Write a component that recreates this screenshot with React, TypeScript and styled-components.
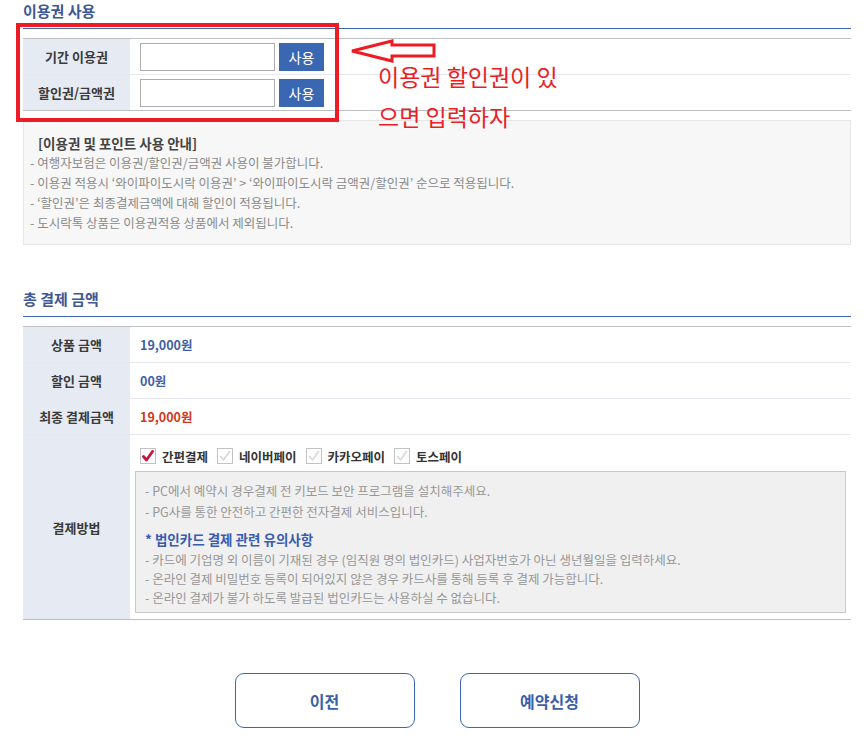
import React from "react";
import styled, {createGlobalStyle} from "styled-components";

const GlobalStyle = createGlobalStyle`
  body {
    margin: 0;
    background: #fff;
    font-family: "Noto Sans CJK KR", "Noto Sans", sans-serif;
    color: #333;
  }
`

const Page = styled.div`
  position: relative;
  width: 828px;
  padding: 0 15px 11px 23px;
`

const SectionTitle = styled.h2<{ $top?: number }>`
  margin: ${props => props.$top || 0}px 0 0;
  padding: 0 0 6px;
  font-size: 15px;
  line-height: 22px;
  font-weight: 700;
  color: #3d5893;
  border-bottom: 1px solid #3c66b1;
`

const FormTable = styled.div`
  margin-top: 9px;
  border-top: 1px solid #bcc0c5;
`

const Row = styled.div<{ $height: number }>`
  display: grid;
  grid-template-columns: 107px 1fr;
  min-height: ${props => props.$height}px;
  border-bottom: 1px solid #e7e7ef;

  &:last-child {
    border-bottom-color: #bcc0c5;
  }
`

const Label = styled.div`
  display: flex;
  align-items: center;
  justify-content: center;
  background: #e6ebf3;
  font-size: 13px;
  font-weight: 700;
  color: #3a3a3a;
`

const Cell = styled.div`
  display: flex;
  align-items: center;
  gap: 4px;
  padding-left: 10px;
`

const TextInput = styled.input`
  box-sizing: border-box;
  width: 135px;
  height: 28px;
  border: 1px solid #acacac;
  padding: 0 6px;
  outline: none;
`

const UseButton = styled.button`
  width: 45px;
  height: 28px;
  border: none;
  background: #3a67b1;
  color: #fff;
  font-family: inherit;
  font-size: 14px;
  padding: 0;
`

const InfoBox = styled.div`
  margin-top: 9px;
  padding: 12px 6px 11px;
  background: #f7f7f7;
  border: 1px solid #e6e6e6;
`

const InfoTitle = styled.div`
  margin-left: 8px;
  font-size: 13.5px;
  line-height: 20px;
  font-weight: 700;
  color: #444;
`

const Note = styled.div<{ $lh?: number, $tone?: string }>`
  font-size: 12.5px;
  line-height: ${props => props.$lh || 20}px;
  color: ${props => props.$tone || '#8a8a8a'};
  white-space: nowrap;
`

const Amount = styled.span<{ $red?: boolean }>`
  font-size: 12.5px;
  font-weight: 700;
  color: ${props => props.$red ? '#d2381b' : '#3e5ea8'};
`

const PayCell = styled.div`
  padding: 13px 5px 5px;
`

const CheckRow = styled.div`
  display: flex;
  align-items: center;
  gap: 9px;
  margin-left: 5px;
  height: 16px;
`

const CheckItem = styled.label`
  display: flex;
  align-items: center;
  gap: 6px;
  font-size: 12.5px;
  font-weight: 700;
  color: #333;
`

const Box = styled.span`
  display: flex;
  align-items: center;
  justify-content: center;
  box-sizing: border-box;
  width: 16px;
  height: 16px;
  border: 1px solid #c2c2c2;
  background: #fff;
`

const NoticeBox = styled.div`
  margin-top: 7px;
  padding: 8px 9px 5px;
  background: #f0f0f0;
  border: 1px solid #c9c9c9;
`

const NoticeTitle = styled.div`
  margin-top: 6px;
  font-size: 13.5px;
  line-height: 22px;
  font-weight: 700;
  color: #3a5cb0;
`

const ButtonRow = styled.div`
  display: flex;
  justify-content: center;
  gap: 45px;
  margin-top: 53px;
`

const OutlineButton = styled.button`
  width: 180px;
  height: 55px;
  border: 1px solid #3b66b2;
  border-radius: 9px;
  background: #fff;
  color: #3b5ea8;
  font-family: inherit;
  font-size: 16px;
  font-weight: 700;
`

/* annotation drawn over the page */
const MarkBox = styled.div`
  position: absolute;
  left: 16px;
  top: 23px;
  width: 315px;
  height: 91px;
  border: 4px solid #ed1c24;
  pointer-events: none;
`

const MarkArrow = styled.svg`
  position: absolute;
  left: 348px;
  top: 36px;
`

const MarkText = styled.div`
  position: absolute;
  left: 378px;
  top: 56px;
  font-size: 23px;
  line-height: 40px;
  color: #ed1c24;
`

const Check = ({on}: { on?: boolean }) => (
    <Box>
        <svg width="12" height="12" viewBox="0 0 12 12">
            <path d="M1.5 6.5 L4.5 10 L10.5 1.5" fill="none" stroke={on ? '#c8163c' : '#d6d6d6'}
                  strokeWidth={on ? 2.8 : 1.6} strokeLinecap="round" strokeLinejoin="round"/>
        </svg>
    </Box>
)

const payMethods = [
    {name: '간편결제', on: true},
    {name: '네이버페이'},
    {name: '카카오페이'},
    {name: '토스페이'},
]

export default function App() {
    return (
        <Page>
            <GlobalStyle/>
            <SectionTitle>이용권 사용</SectionTitle>
            <FormTable>
                <Row $height={35}>
                    <Label>기간 이용권</Label>
                    <Cell>
                        <TextInput/>
                        <UseButton>사용</UseButton>
                    </Cell>
                </Row>
                <Row $height={35}>
                    <Label>할인권/금액권</Label>
                    <Cell>
                        <TextInput/>
                        <UseButton>사용</UseButton>
                    </Cell>
                </Row>
            </FormTable>
            <InfoBox>
                <InfoTitle>[이용권 및 포인트 사용 안내]</InfoTitle>
                <Note>- 여행자보험은 이용권/할인권/금액권 사용이 불가합니다.</Note>
                <Note>- 이용권 적용시 ‘와이파이도시락 이용권’ &gt; ‘와이파이도시락 금액권/할인권’ 순으로 적용됩니다.</Note>
                <Note>- ‘할인권’은 최종결제금액에 대해 할인이 적용됩니다.</Note>
                <Note>- 도시락톡 상품은 이용권적용 상품에서 제외됩니다.</Note>
            </InfoBox>

            <SectionTitle $top={43}>총 결제 금액</SectionTitle>
            <FormTable>
                <Row $height={35}>
                    <Label>상품 금액</Label>
                    <Cell><Amount>19,000원</Amount></Cell>
                </Row>
                <Row $height={35}>
                    <Label>할인 금액</Label>
                    <Cell><Amount>00원</Amount></Cell>
                </Row>
                <Row $height={35}>
                    <Label>최종 결제금액</Label>
                    <Cell><Amount $red>19,000원</Amount></Cell>
                </Row>
                <Row $height={184}>
                    <Label>결제방법</Label>
                    <PayCell>
                        <CheckRow>
                            {payMethods.map(m => (
                                <CheckItem key={m.name}>
                                    <Check on={m.on}/>
                                    {m.name}
                                </CheckItem>
                            ))}
                        </CheckRow>
                        <NoticeBox>
                            <Note $lh={21} $tone={'#979797'}>- PC에서 예약시 경우결제 전 키보드 보안 프로그램을 설치해주세요.</Note>
                            <Note $lh={21} $tone={'#979797'}>- PG사를 통한 안전하고 간편한 전자결제 서비스입니다.</Note>
                            <NoticeTitle>* 법인카드 결제 관련 유의사항</NoticeTitle>
                            <Note $lh={19} $tone={'#979797'}>- 카드에 기업명 외 이름이 기재된 경우 (임직원 명의 법인카드) 사업자번호가 아닌 생년월일을 입력하세요.</Note>
                            <Note $lh={19} $tone={'#979797'}>- 온라인 결제 비밀번호 등록이 되어있지 않은 경우 카드사를 통해 등록 후 결제 가능합니다.</Note>
                            <Note $lh={19} $tone={'#979797'}>- 온라인 결제가 불가 하도록 발급된 법인카드는 사용하실 수 없습니다.</Note>
                        </NoticeBox>
                    </PayCell>
                </Row>
            </FormTable>

            <ButtonRow>
                <OutlineButton>이전</OutlineButton>
                <OutlineButton>예약신청</OutlineButton>
            </ButtonRow>

            <MarkBox/>
            <MarkArrow width="90" height="30" viewBox="0 0 90 30">
                <polygon points="4,15 44,5 44,9 86,9 86,20 44,20 44,25" fill="none" stroke="#ed1c24"
                         strokeWidth="3" strokeLinejoin="miter"/>
            </MarkArrow>
            <MarkText>
                이용권 할인권이 있<br/>
                으면 입력하자
            </MarkText>
        </Page>
    );
}
